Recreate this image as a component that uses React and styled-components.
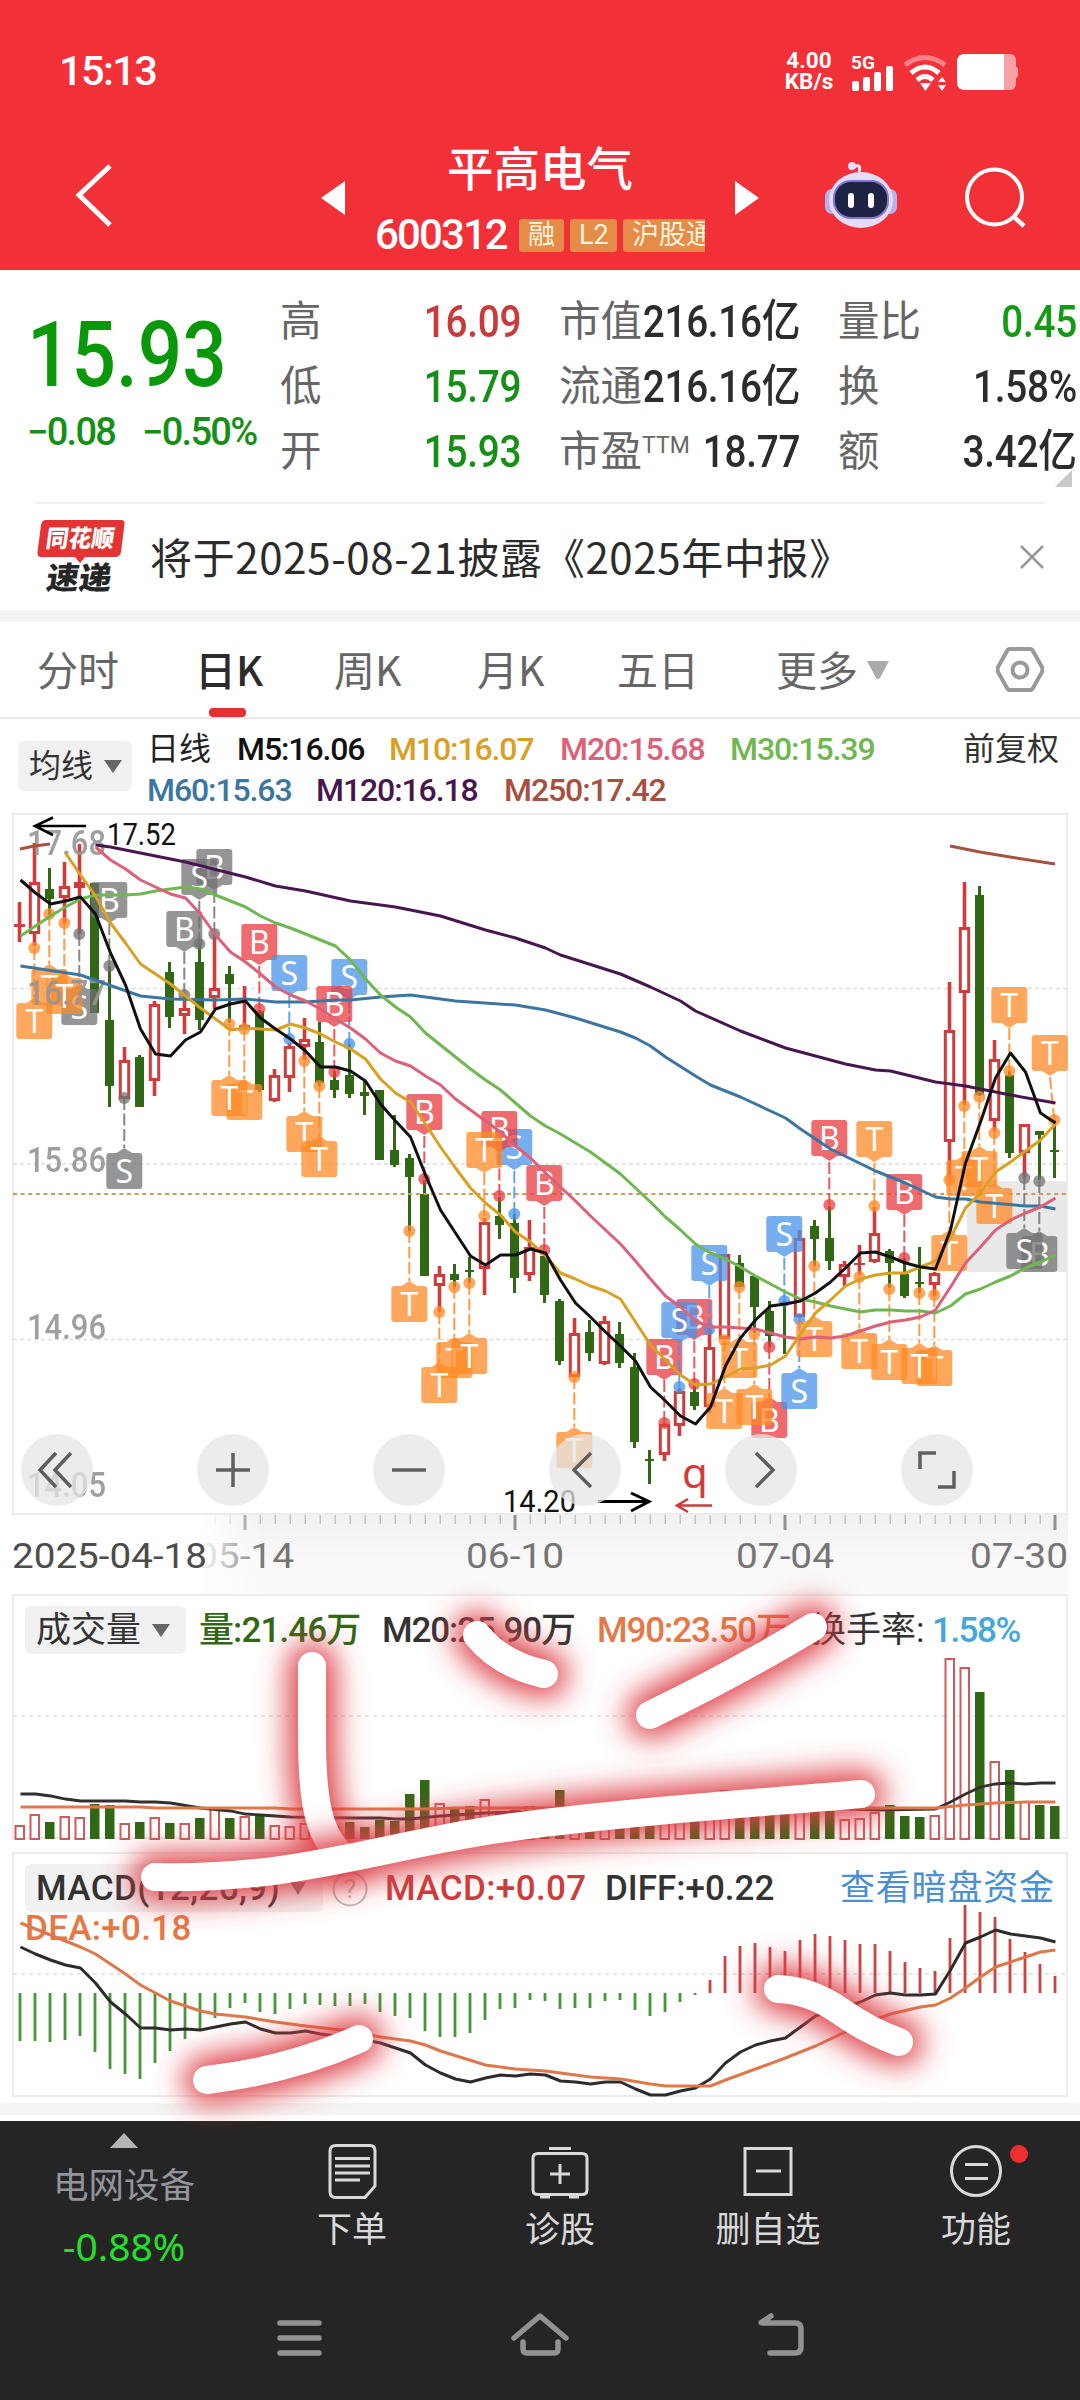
import styled, { createGlobalStyle } from "styled-components";

const GlobalStyle = createGlobalStyle`
  * {
    box-sizing: border-box;
  }
  body {
    margin: 0;
    background-color: white;
    font-family: Roboto, "Noto Sans CJK SC", sans-serif;
  }
  svg {
    display: block;
    flex: none;
  }
`;

const Page = styled.div`
  width: 1080px;
  height: 2400px;
  overflow: hidden;
  display: flex;
  flex-direction: column;
`;

const Text = styled.span`
  display: block;
  flex: none;
  white-space: nowrap;
  color: ${(props) => props.$color || "#333"};
  font-size: ${(props) => props.$size}px;
  font-weight: ${(props) => props.$weight || 400};
  letter-spacing: ${(props) => props.$ls || 0}px;
  line-height: 1;
  width: ${(props) => (props.$w ? props.$w + "px" : "auto")};
`;

/* header */

const Header = styled.header`
  height: 270px;
  flex: none;
  background-color: #f23038;
`;

const StatusBar = styled.div`
  height: 142px;
  padding: 0 62px 0 59px;
  display: flex;
  align-items: center;
`;

const StatusIcons = styled.div`
  margin-left: auto;
  display: flex;
  align-items: center;
`;

const Speed = styled.div`
  display: flex;
  flex-direction: column;
  align-items: center;
  width: 48px;
  margin-right: 17px;
  color: white;
  font-size: 22.5px;
  line-height: 21px;
  font-weight: 700;
`;

const TitleBar = styled.div`
  height: 128px;
  display: flex;
  align-items: flex-start;
  padding-left: 75px;
`;

const BackButton = styled.div`
  width: 246px;
  padding-top: 20px;
`;

const Arrow = styled.div`
  width: ${(props) => props.$w}px;
  padding-top: 39px;
`;

const TitleBlock = styled.div`
  width: 330px;
  margin-right: 30px;
  display: flex;
  flex-direction: column;
  align-items: center;
`;

const StockName = styled.div`
  height: 72px;
  line-height: 56px;
  font-size: 46.5px;
  font-weight: 500;
  color: white;
`;

const CodeRow = styled.div`
  width: 330px;
  height: 42px;
  display: flex;
  align-items: center;
  gap: 6px;
  overflow: hidden;
`;

const Tag = styled.span`
  flex: none;
  height: 33px;
  width: ${(props) => props.$w}px;
  padding-left: 9px;
  overflow: hidden;
  white-space: nowrap;
  border-radius: ${(props) => (props.$cut ? "3px 0 0 3px" : "3px")};
  background-color: #e48c48;
  color: #fff4dc;
  font-size: 27px;
  line-height: 33px;
`;

/* quote */

const Quote = styled.section`
  height: 232px;
  flex: none;
  display: flex;
  padding: 19px 0 0 27px;
  position: relative;
`;

const PriceBlock = styled.div`
  width: 253px;
  padding-top: 21px;
`;

const Price = styled(Text)`
  transform: scaleX(0.86);
  transform-origin: left;
`;

const Change = styled.div`
  display: flex;
  margin-top: 12px;
`;

const Stats = styled.div`
  display: grid;
  grid-template-columns: 241px 241px 239px;
  grid-auto-rows: 65px;
  column-gap: 38px;
`;

const Stat = styled.div`
  display: flex;
  align-items: center;
  justify-content: space-between;
`;

const Value = styled(Text)`
  margin-left: -60px;
  transform: scaleX(0.86);
  transform-origin: right;
`;

const Sup = styled.sup`
  font-size: 23px;
  line-height: 0;
  vertical-align: 13px;
`;

const Corner = styled.i`
  position: absolute;
  right: 8px;
  top: 200px;
  border-left: 17px solid transparent;
  border-bottom: 17px solid #c9c9c9;
`;

const Notice = styled.section`
  height: 108px;
  flex: none;
  margin: 0 36px;
  border-top: 2px solid #eee;
  display: flex;
  align-items: center;
`;

const NoticeText = styled.p`
  margin: 0 auto 0 24px;
  padding-bottom: 4px;
  font-family: "Noto Sans CJK SC", sans-serif;
  font-size: 42px;
  letter-spacing: 0.65px;
  color: #2b2b2b;
  white-space: nowrap;
`;

const Band = styled.div`
  height: 12px;
  flex: none;
  background-color: #f4f4f4;
`;

/* tabs */

const Tabs = styled.nav`
  height: 97px;
  flex: none;
  display: flex;
  border-bottom: 2px solid #e8e8e8;
  padding-left: 37px;
`;

const Tab = styled.div`
  width: ${(props) => props.$w}px;
  display: flex;
  flex-direction: column;
  justify-content: space-between;
  padding-top: 22px;
  font-family: "Noto Sans CJK SC", sans-serif;
  font-size: 41px;
  line-height: 49px;
  font-weight: ${(props) => (props.$active ? 500 : 400)};
  color: ${(props) => (props.$active ? "#2b2b2b" : "#666")};
`;

const Underline = styled.i`
  width: 37px;
  height: 9px;
  margin-left: 14px;
  border-radius: 4px;
  background-color: #e5302f;
`;

const MoreTab = styled(Tab)`
  flex-direction: row;
  justify-content: flex-start;
  gap: 9px;
`;

const Triangle = styled.i`
  flex: none;
  border: ${(props) => props.$s}px solid transparent;
  border-top: ${(props) => props.$h}px solid ${(props) => props.$color};
  border-bottom: 0;
`;

/* indicators */

const Legend = styled.section`
  height: 94px;
  flex: none;
  display: flex;
  padding: 9px 0 0 18px;
`;

const Picker = styled.div`
  width: ${(props) => props.$w}px;
  height: ${(props) => props.$h}px;
  margin-top: ${(props) => props.$mt || 0}px;
  padding-left: 11px;
  display: flex;
  flex: none;
  align-items: center;
  gap: 11px;
  border-radius: 6px;
  background-color: #f1f1f1;
`;

const LegendRows = styled.div`
  margin-left: 15px;
  width: 816px;
`;

const LegendRow = styled.div`
  height: 41px;
  display: flex;
  align-items: center;
`;

/* charts */

const Charts = styled.section`
  position: relative;
  height: 1290px;
  flex: none;
`;

const Controls = styled.div`
  position: absolute;
  left: 21px;
  top: 621px;
  display: flex;
  gap: 104px;
`;

const Round = styled.button`
  width: 72px;
  height: 72px;
  padding: 0;
  border: 0;
  border-radius: 50%;
  background-color: rgba(230, 230, 230, 0.75);
`;

const Panel = styled.div`
  position: relative;
  height: ${(props) => props.$h}px;
`;

const PanelHead = styled.div`
  position: absolute;
  left: 25px;
  top: ${(props) => props.$top}px;
  width: 1040px;
  height: 50px;
  display: flex;
  align-items: center;
`;

const VolumeText = styled(Text)`
  margin-left: 13px;
`;

const Overlay = styled.svg`
  position: absolute;
  left: 0;
  top: ${(props) => props.$top || 0}px;
`;

/* bottom */

const Bottom = styled.footer`
  height: 279px;
  flex: none;
  margin-top: 6px;
  background-color: #252525;
`;

const Actions = styled.div`
  height: 150px;
  display: flex;
`;

const Sector = styled.div`
  width: 248px;
  display: flex;
  flex-direction: column;
  align-items: center;
  gap: 21px;
  padding-top: 12px;
`;

const SectorChange = styled(Text)`
  font-family: "Noto Sans", sans-serif;
`;

const Up = styled.i`
  border: 14px solid transparent;
  border-bottom: 15px solid #b5b5b5;
  border-top: 0;
`;

const Action = styled.div`
  width: 208px;
  display: flex;
  flex-direction: column;
  align-items: center;
  padding-top: 18px;
  font-family: "Noto Sans CJK SC", sans-serif;
  font-size: 35px;
  line-height: 46px;
  color: #d9d9d9;
`;

const NavKeys = styled.div`
  height: 129px;
  display: flex;
  justify-content: center;
  gap: 180px;
  padding-top: 36px;
`;

const X = (i) => 19.5 + 15 * i;

// [up, high, low, body top, body bottom] in chart pixels
const candles = [
  [1, 902, 942, 924, 927], [1, 843, 946, 882, 934], [0, 868, 915, 889, 899], [1, 862, 923, 886, 898],
  [1, 844, 934, 882, 888], [0, 883, 1013, 883, 1013], [0, 966, 1107, 1020, 1086], [1, 1047, 1099, 1060, 1099],
  [0, 1055, 1107, 1057, 1107], [1, 1001, 1096, 1004, 1081], [0, 962, 1028, 972, 1017], [1, 996, 1034, 1008, 1016],
  [0, 943, 1030, 962, 1020], [1, 934, 1009, 988, 998], [0, 966, 1023, 974, 984], [1, 986, 1028, 1025, 1029],
  [0, 1010, 1092, 1011, 1090], [1, 1069, 1102, 1075, 1101], [1, 1043, 1092, 1046, 1078], [1, 1018, 1060, 1039, 1047],
  [0, 1022, 1086, 1042, 1083], [0, 1071, 1098, 1080, 1090], [0, 1044, 1098, 1075, 1094], [0, 1081, 1115, 1092, 1096],
  [0, 1090, 1160, 1090, 1160], [0, 1115, 1167, 1150, 1165], [0, 1154, 1231, 1158, 1177], [0, 1180, 1276, 1194, 1276],
  [1, 1266, 1312, 1274, 1286], [0, 1264, 1287, 1274, 1280], [0, 1257, 1283, 1270, 1272], [1, 1218, 1295, 1222, 1269],
  [0, 1197, 1239, 1216, 1225], [0, 1214, 1293, 1223, 1278], [1, 1220, 1281, 1247, 1275], [0, 1252, 1303, 1256, 1295],
  [0, 1299, 1365, 1301, 1361], [1, 1318, 1377, 1333, 1377], [0, 1320, 1361, 1332, 1353], [1, 1316, 1365, 1321, 1364],
  [0, 1322, 1368, 1334, 1363], [0, 1353, 1448, 1367, 1442], [0, 1450, 1484, 1459, 1461], [1, 1423, 1461, 1424, 1455],
  [1, 1388, 1436, 1391, 1426], [0, 1385, 1410, 1392, 1406], [1, 1325, 1413, 1347, 1407], [1, 1254, 1339, 1254, 1339],
  [0, 1255, 1287, 1263, 1287], [0, 1276, 1333, 1276, 1307], [0, 1301, 1347, 1311, 1336], [0, 1301, 1354, 1302, 1304],
  [1, 1230, 1318, 1238, 1317], [0, 1220, 1266, 1226, 1239], [0, 1206, 1270, 1238, 1261], [1, 1261, 1286, 1264, 1277],
  [1, 1245, 1275, 1263, 1265], [1, 1207, 1263, 1233, 1262], [0, 1249, 1288, 1251, 1263], [0, 1258, 1298, 1274, 1296],
  [0, 1247, 1293, 1282, 1284], [1, 1272, 1296, 1273, 1285], [1, 982, 1180, 1030, 1142], [1, 882, 1105, 927, 993],
  [0, 886, 1096, 895, 1095], [1, 1040, 1132, 1059, 1121], [0, 1071, 1158, 1075, 1153], [1, 1124, 1178, 1124, 1153],
  [0, 1131, 1180, 1131, 1135], [0, 1120, 1178, 1150, 1152],
];

const m5 = [880, 893, 904, 901, 897, 914, 953, 985, 1029, 1054, 1056, 1040, 1032, 1009, 1004, 1001, 1018, 1029, 1039, 1051, 1067, 1067, 1071, 1081, 1104, 1121, 1137, 1175, 1210, 1233, 1256, 1265, 1255, 1255, 1249, 1253, 1280, 1303, 1317, 1332, 1346, 1361, 1387, 1401, 1416, 1424, 1407, 1366, 1338, 1320, 1306, 1304, 1301, 1293, 1282, 1268, 1253, 1252, 1257, 1263, 1267, 1269, 1230, 1163, 1122, 1078, 1053, 1072, 1113, 1123];
const m10 = [853, 875, 896, 923, 943, 964, 974, 984, 996, 1008, 1019, 1030, 1028, 1029, 1030, 1024, 1028, 1034, 1042, 1049, 1059, 1079, 1093, 1102, 1124, 1147, 1168, 1188, 1203, 1215, 1232, 1242, 1256, 1273, 1279, 1286, 1291, 1299, 1322, 1345, 1360, 1375, 1385, 1384, 1377, 1369, 1368, 1365, 1356, 1334, 1313, 1300, 1286, 1279, 1275, 1273, 1273, 1267, 1261, 1238, 1208, 1193, 1172, 1162, 1151, 1140, 1124];
const m20 = [847, 860, 869, 880, 887, 894, 898, 914, 935, 952, 962, 974, 987, 995, 1001, 1009, 1019, 1028, 1039, 1053, 1061, 1066, 1076, 1085, 1099, 1110, 1121, 1132, 1146, 1158, 1173, 1187, 1201, 1216, 1230, 1244, 1261, 1279, 1296, 1307, 1321, 1327, 1327, 1328, 1329, 1333, 1337, 1339, 1337, 1338, 1336, 1331, 1326, 1322, 1320, 1317, 1310, 1287, 1263, 1247, 1230, 1220, 1213, 1207, 1198];
const m30 = [936, 926, 916, 907, 899, 895, 895, 895, 894, 891, 889, 887, 889, 895, 901, 907, 916, 923, 928, 934, 940, 946, 960, 979, 995, 1007, 1017, 1033, 1045, 1057, 1069, 1080, 1090, 1103, 1116, 1126, 1134, 1143, 1152, 1163, 1174, 1188, 1202, 1217, 1230, 1244, 1253, 1259, 1267, 1276, 1284, 1292, 1299, 1302, 1306, 1309, 1312, 1310, 1310, 1311, 1311, 1313, 1306, 1294, 1289, 1282, 1276, 1268, 1262, 1255];

// sparse lines as [index, y]
const m60 = [[0, 966], [4, 975], [8, 996], [10, 999], [13, 1000], [15, 999], [17, 1002], [19, 1002], [21, 1000], [22, 1000], [24, 997], [26, 995], [29, 1001], [33, 1005], [35, 1010], [37, 1018], [40, 1032], [41, 1038], [42, 1046], [43, 1057], [45, 1076], [46, 1085], [48, 1097], [50, 1111], [51, 1118], [52, 1129], [54, 1149], [57, 1171], [59, 1183], [61, 1197], [62, 1199], [63, 1199], [64, 1202], [67, 1206], [68, 1206], [69, 1209]];
const m120 = [[5, 845], [6, 847], [8, 853], [11, 862], [15, 877], [17, 886], [19, 891], [22, 901], [25, 907], [28, 916], [31, 930], [33, 938], [35, 948], [36, 955], [40, 974], [42, 987], [44, 1001], [45, 1011], [48, 1031], [51, 1048], [53, 1056], [55, 1064], [57, 1070], [58, 1071], [61, 1082], [63, 1086], [66, 1095], [69, 1103]];

const dense = (values, start = 0) => values.map((y, k) => `${X(k + start) + 1},${y}`).join(" ");
const sparse = (points) => points.map(([i, y]) => `${X(i) + 1},${y}`).join(" ");

const markerColors = { o: "#ff8a26", g: "#727272", r: "#e93c40", b: "#4a93ea" };

// [letter, colour, index, box top, dot y, box shift]
const markers = [
  ["T", "o", 1, 1003, 948], ["T", "o", 2, 969, 914], ["S", "g", 4, 989, 934], ["T", "o", 3, 978, 923],
  ["B", "g", 6, 882, 966], ["S", "g", 7, 1153, 1098], ["B", "g", 11, 911, 995], ["B", "g", 13, 849, 934],
  ["S", "g", 12, 859, 944], ["T", "o", 15, 1084, 1029], ["T", "o", 14, 1080, 1024], ["B", "r", 16, 924, 1009],
  ["S", "b", 18, 955, 1039], ["T", "o", 19, 1116, 1061], ["T", "o", 20, 1141, 1086], ["S", "b", 22, 959, 1044],
  ["B", "r", 21, 986, 1072], ["T", "o", 26, 1286, 1231], ["B", "r", 27, 1094, 1179], ["T", "o", 29, 1342, 1287],
  ["T", "o", 28, 1367, 1312], ["T", "o", 30, 1338, 1283], ["S", "b", 33, 1129, 1214], ["B", "r", 32, 1111, 1196],
  ["T", "o", 31, 1132, 1216], ["B", "r", 35, 1165, 1250], ["T", "o", 37, 1432, 1377], ["B", "r", 43, 1339, 1423],
  ["B", "r", 45, 1299, 1384], ["S", "b", 44, 1302, 1387], ["S", "b", 46, 1245, 1329], ["T", "o", 47, 1393, 1340],
  ["T", "o", 48, 1342, 1287], ["B", "r", 50, 1402, 1347], ["T", "o", 49, 1389, 1334], ["S", "b", 51, 1216, 1301],
  ["S", "b", 52, 1373, 1319], ["T", "o", 53, 1321, 1266], ["B", "r", 54, 1120, 1205], ["T", "o", 56, 1333, 1277],
  ["T", "o", 57, 1121, 1206], ["T", "o", 58, 1344, 1289], ["B", "r", 59, 1174, 1258], ["T", "o", 61, 1350, 1295],
  ["T", "o", 60, 1348, 1293], ["T", "o", 62, 1235, 1180], ["T", "o", 63, 1160, 1106], ["T", "o", 64, 1151, 1097],
  ["T", "o", 65, 1188, 1133], ["T", "o", 66, 987, 1071], ["T", "o", 69, 1035, 1120, -4.5], ["B", "g", 68, 1236, 1181],
  ["S", "g", 67, 1233, 1178],
];

const volume = [1825, 1814, 1822, 1816, 1817, 1804, 1805, 1823, 1822, 1817, 1823, 1823, 1818, 1807, 1818, 1816, 1816, 1825, 1826, 1823, 1828, 1826, 1822, 1827, 1820, 1821, 1794, 1780, 1803, 1809, 1806, 1799, 1811, 1810, 1806, 1810, 1790, 1818, 1819, 1815, 1812, 1808, 1812, 1812, 1810, 1812, 1805, 1790, 1805, 1805, 1805, 1808, 1800, 1806, 1811, 1819, 1818, 1812, 1805, 1816, 1817, 1815, 1658, 1667, 1692, 1761, 1770, 1801, 1805, 1806];
const volM20 = [[0, 1794], [1, 1794], [2, 1796], [3, 1799], [4, 1801], [7, 1801], [8, 1802], [9, 1802], [10, 1803], [12, 1808], [14, 1811], [15, 1814], [16, 1815], [18, 1817], [22, 1818], [24, 1818], [25, 1819], [26, 1819], [28, 1816], [31, 1813], [34, 1812], [38, 1807], [46, 1804], [54, 1808], [57, 1810], [61, 1809], [62, 1802], [63, 1794], [64, 1787], [65, 1784], [66, 1783], [67, 1784], [68, 1783], [69, 1783]];
const volM90 = [[0, 1807], [8, 1807], [9, 1808], [17, 1808], [18, 1809], [27, 1809], [29, 1808], [61, 1808], [63, 1805], [65, 1803], [67, 1802], [69, 1802]];

const macd = [2041, 2041, 2042, 2040, 2036, 2052, 2069, 2074, 2079, 2063, 2051, 2039, 2029, 2018, 2008, 2003, 2012, 2014, 2009, 2004, 2005, 2006, 2006, 2004, 2012, 2016, 2018, 2031, 2037, 2037, 2033, 2020, 2009, 2008, 2000, 2001, 2009, 2008, 2008, 2001, 2000, 2010, 2016, 2012, 2002, 1995, 1980, 1956, 1946, 1943, 1947, 1951, 1940, 1934, 1936, 1940, 1944, 1944, 1951, 1962, 1968, 1971, 1938, 1905, 1912, 1917, 1939, 1952, 1964, 1976];
const diff = [1947, 1954, 1960, 1965, 1968, 1983, 2002, 2014, 2028, 2028, 2030, 2029, 2030, 2027, 2024, 2022, 2029, 2033, 2033, 2031, 2034, 2036, 2038, 2040, 2043, 2048, 2053, 2065, 2073, 2079, 2082, 2078, 2075, 2076, 2074, 2075, 2081, 2082, 2084, 2082, 2082, 2089, 2095, 2095, 2091, 2088, 2079, 2063, 2052, 2045, 2041, 2038, 2027, 2016, 2010, 2007, 2002, 1995, 1993, 1995, 1995, 1994, 1970, 1943, 1937, 1930, 1934, 1936, 1938, 1942];
const dea = [[0, 1923], [4, 1947], [5, 1954], [6, 1964], [7, 1974], [8, 1985], [9, 1993], [10, 2001], [12, 2011], [13, 2014], [15, 2017], [17, 2022], [19, 2026], [22, 2031], [24, 2037], [26, 2041], [27, 2045], [28, 2051], [31, 2065], [33, 2069], [35, 2071], [38, 2077], [40, 2079], [42, 2084], [43, 2086], [46, 2086], [47, 2080], [49, 2069], [51, 2058], [53, 2046], [55, 2032], [56, 2025], [58, 2014], [60, 2007], [61, 2005], [62, 1998], [63, 1988], [64, 1977], [65, 1967], [66, 1962], [67, 1957], [68, 1952], [69, 1950]];

const RED = "#d03c3c";
const GREEN = "#316815";

function Candle({ data, i }) {
  const [up, high, low, top, bottom] = data;
  const x = X(i);
  if (!up) {
    return (
      <g fill={GREEN}>
        <rect x={x - 1.5} y={high} width="3" height={low - high} />
        <rect x={x - 4.5} y={top} width="9" height={bottom - top} />
      </g>
    );
  }
  const flat = bottom - top < 7;
  return (
    <g fill={RED}>
      <rect x={x - 1.8} y={high} width="3.6" height={Math.max(top - high, 0)} />
      <rect x={x - 1.8} y={bottom} width="3.6" height={Math.max(low - bottom, 0)} />
      <rect
        x={flat ? x - 5.5 : x - 4.2}
        y={flat ? top : top + 1.5}
        width={flat ? 11 : 8.4}
        height={flat ? bottom - top : bottom - top - 3}
        fill={flat ? RED : "white"}
        stroke={flat ? "none" : RED}
        strokeWidth="3"
      />
    </g>
  );
}

function Marker({ data }) {
  const [letter, key, i, top, dot, shift = 0] = data;
  const color = markerColors[key];
  const x = X(i) - 0.2;
  const bx = x + shift;
  const below = top > dot;
  const edge = below ? top : top + 36;
  const tip = below ? top - 5 : top + 41;
  return (
    <g>
      <circle cx={x} cy={dot} r="6" fill={color} opacity="0.75" />
      <line x1={x} y1={dot} x2={bx} y2={tip} stroke={color} strokeWidth="2" strokeDasharray="12 3.5" opacity="0.85" />
      <g fill={color} opacity="0.75">
        <rect x={bx - 18} y={top} width="36" height="36" rx="3" />
        <path d={`M${bx - 8} ${edge}L${bx} ${tip}L${bx + 8} ${edge}Z`} />
      </g>
      <text x={bx} y={top + 29.5} fill="white" fontSize="32" fontFamily="Noto Sans" textAnchor="middle">
        {letter}
      </text>
    </g>
  );
}

function AxisText({ x, y, w, color, size = 35, children }) {
  return (
    <text x={x} y={y} fill={color} fontSize={size} textLength={w} lengthAdjust="spacingAndGlyphs">
      {children}
    </text>
  );
}

function KChart() {
  return (
    <svg width="1080" height="781" viewBox="0 813 1080 781">
      <defs>
        <linearGradient id="strip" x1="0" x2="0" y1="0" y2="1">
          <stop offset="0" stopColor="#f1f1f1" />
          <stop offset="0.6" stopColor="#f9f9f9" />
          <stop offset="1" stopColor="#fafafa" />
        </linearGradient>
        <linearGradient id="fade" x1="0" x2="1" y1="0" y2="0">
          <stop offset="0.75" stopColor="white" />
          <stop offset="1" stopColor="white" stopOpacity="0" />
        </linearGradient>
      </defs>
      <rect x="0" y="1515" width="1068" height="79" fill="url(#strip)" />
      <rect x="13" y="814" width="1054" height="700" fill="white" stroke="#ececec" strokeWidth="2" />
      <g stroke="#dedede" strokeWidth="1.3" strokeDasharray="4 3">
        <path d="M13 988.5H1066M13 1164H1066M13 1339.5H1066" />
      </g>
      <rect x="967" y="1181" width="100" height="91" fill="#e9e9e9" />
      {candles.map((c, i) => (
        <Candle key={i} data={c} i={i} />
      ))}
      <path d="M13 1194H1066" stroke="#cd9a5b" strokeWidth="1.8" strokeDasharray="4 3.6" />
      {markers.map((m, i) => (
        <Marker key={i} data={m} />
      ))}
      <g fontWeight="500" opacity="0.9">
        <AxisText x="27" y="855" w="79" color="#959595">17.68</AxisText>
        <AxisText x="27" y="1005" w="79" color="#959595">16.77</AxisText>
        <AxisText x="27" y="1172" w="79" color="#959595">15.86</AxisText>
        <AxisText x="27" y="1339" w="79" color="#959595">14.96</AxisText>
        <AxisText x="27" y="1497" w="79" color="#959595">14.05</AxisText>
      </g>
      <g fill="none" strokeWidth="3" strokeLinejoin="round">
        <polyline points={sparse(m120)} stroke="#471650" />
        <polyline points={sparse(m60)} stroke="#3b76a0" />
        <polyline points={dense(m30)} stroke="#6fb751" />
        <polyline points={dense(m20, 5)} stroke="#dd6079" />
        <polyline points={dense(m10, 3)} stroke="#daa022" />
        <polyline points={dense(m5)} stroke="#111" />
        <polyline points="20,849 34,846 50,844" stroke="#a8503f" />
        <polyline points="950,846 980,852 1010,857 1055,864" stroke="#a8503f" />
      </g>
      <path d="M86 826H36M53 817.5L35 826L53 835" fill="none" stroke="black" strokeWidth="2.6" />
      <AxisText x="107" y="845" w="69" color="#111" size="31">17.52</AxisText>
      <AxisText x="503" y="1512" w="73" color="#111" size="31">14.20</AxisText>
      <path d="M598 1501.5H648M631 1493L649 1501.5L631 1511" fill="none" stroke="black" strokeWidth="3" />
      <text x="682" y="1488" fill={RED} fontSize="42" fontFamily="Noto Sans">q</text>
      <path d="M712 1505.5H678M688 1499L677 1505.5L688 1512" fill="none" stroke={RED} strokeWidth="2.6" />
      {Array.from({ length: 57 }, (_, k) => k + 13).map((i) => {
        const major = (i - 15) % 18 === 0;
        return (
          <rect key={i} x={X(i) + (major ? -1 : 0)} y="1515" width={major ? 3 : 1.5} height={major ? 15 : 9} fill={major ? "#909090" : "#c2c2c2"} />
        );
      })}
      <AxisText x="196" y="1568" w="98" color="#757575">05-14</AxisText>
      <rect x="0" y="1515" width="265" height="79" fill="url(#fade)" />
      <AxisText x="12" y="1568" w="195" color="#4c4c4c">2025-04-18</AxisText>
      <AxisText x="466" y="1568" w="98" color="#757575">06-10</AxisText>
      <AxisText x="736" y="1568" w="98" color="#757575">07-04</AxisText>
      <AxisText x="970" y="1568" w="98" color="#757575">07-30</AxisText>
    </svg>
  );
}

function VolumeChart() {
  return (
    <svg width="1080" height="258" viewBox="0 1594 1080 258">
      <rect x="13" y="1595" width="1054" height="243" fill="white" stroke="#ececec" strokeWidth="2" />
      <path d="M13 1716H1066" stroke="#e4e4e4" strokeWidth="2" strokeDasharray="4 4" />
      {volume.map((y, i) =>
        candles[i][0] ? (
          <rect key={i} x={X(i) - 4} y={y + 1} width="8.5" height={1838 - y} fill="white" stroke="#d05a5b" strokeWidth="2" />
        ) : (
          <rect key={i} x={X(i) - 4.5} y={y} width="9.5" height={1839 - y} fill={GREEN} />
        )
      )}
      <g fill="none" strokeWidth="2.8">
        <polyline points={sparse(volM20)} stroke="#303030" />
        <polyline points={sparse(volM90)} stroke="#e0794a" />
      </g>
    </svg>
  );
}

function MacdChart() {
  return (
    <svg width="1080" height="251" viewBox="0 1852 1080 251">
      <rect x="13" y="1853" width="1054" height="243" fill="white" stroke="#ececec" strokeWidth="2" />
      <path d="M13 1974H1066" stroke="#e4e4e4" strokeWidth="2" strokeDasharray="4 4" />
      {macd.map((y, i) => (
        <path key={i} d={`M${X(i) + 0.5} 1993V${y}`} stroke={y > 1993 ? "#47953b" : "#cb4343"} strokeWidth="2.8" />
      ))}
    </svg>
  );
}

const strokes = [
  "M312 1666V1735C312 1800 318 1835 342 1856",
  "M477 1635Q500 1664 544 1674",
  "M813 1627Q735 1674 650 1715",
  "M155 1877C290 1880 370 1850 480 1832S760 1803 861 1794",
  "M207 2080Q290 2070 359 2039",
  "M778 1989Q810 1990 840 2011T899 2042",
];

function Scribble() {
  return (
    <Overlay $top={727} width="1080" height="660" viewBox="0 1540 1080 660">
      <defs>
        <filter id="glow" filterUnits="userSpaceOnUse" x="0" y="1500" width="1080" height="700">
          <feGaussianBlur stdDeviation="15" />
        </filter>
      </defs>
      {strokes.map((d) => (
        <g key={d} fill="none" strokeLinecap="round">
          <path d={d} stroke="#dd3d45" strokeWidth="47" filter="url(#glow)" />
          <path d={d} stroke="white" strokeWidth="28" />
        </g>
      ))}
    </Overlay>
  );
}

function TopBar() {
  return (
    <Header>
      <StatusBar>
        <Text $size={41.5} $weight={500} $ls={-1.6} $color="white">15:13</Text>
        <StatusIcons>
          <Speed>
            <span>4.00</span>
            <span>KB/s</span>
          </Speed>
          <svg width="168" height="42" viewBox="850 49 168 42">
            <text x="851" y="68" fill="white" fontSize="19" fontWeight="700" textLength="24">5G</text>
            <g fill="white">
              <rect x="852" y="80" width="7" height="10" rx="2" />
              <rect x="863" y="76" width="7" height="14" rx="2" />
              <rect x="874" y="71" width="7" height="19" rx="2" />
              <rect x="886" y="65" width="7" height="25" rx="2" />
            </g>
            <g fill="none" stroke="white" strokeWidth="5">
              <path d="M905 64Q925 49 945 64" opacity="0.4" />
              <path d="M911 72Q925 60 939 72" />
              <path d="M917 79Q925 72 933 79" />
            </g>
            <path d="M920 82H931L925.5 90ZM938 81L942 76L946 81ZM938 84H946L942 90Z" fill="white" />
            <path d="M1004 53H1010Q1016 53 1016 60V66Q1019 67 1019 71Q1019 76 1016 77V82Q1016 89 1010 89H1004Z" fill="white" opacity="0.55" />
            <path d="M1004 53H965Q957 53 957 61V81Q957 89 965 89H1004Z" fill="white" />
          </svg>
        </StatusIcons>
      </StatusBar>
      <TitleBar>
        <BackButton>
          <svg width="40" height="66" viewBox="75 162 40 66">
            <path d="M110 166L79 195L110 225" fill="none" stroke="white" strokeWidth="5" />
          </svg>
        </BackButton>
        <Arrow $w={54}>
          <svg width="24" height="34" viewBox="0 0 24 34">
            <path d="M24 0V34L0 17Z" fill="white" />
          </svg>
        </Arrow>
        <TitleBlock>
          <StockName>平高电气</StockName>
          <CodeRow>
            <Text $size={42} $weight={500} $ls={-1.9} $w={138} $color="white">600312</Text>
            <Tag $w={45}>融</Tag>
            <Tag $w={47}>L2</Tag>
            <Tag $w={82} $cut>沪股通</Tag>
          </CodeRow>
        </TitleBlock>
        <Arrow $w={89}>
          <svg width="24" height="34" viewBox="0 0 24 34">
            <path d="M0 0V34L24 17Z" fill="white" />
          </svg>
        </Arrow>
        <svg width="220" height="90" viewBox="824 142 220 90">
          <path d="M859 172Q862 163 853 167" fill="none" stroke="#f3ecff" strokeWidth="3" />
          <circle cx="852" cy="166" r="4" fill="#e9defa" />
          <rect x="825" y="189" width="14" height="25" rx="7" fill="#b9b1ee" />
          <rect x="883" y="189" width="14" height="25" rx="7" fill="#b9b1ee" />
          <ellipse cx="861" cy="200" rx="32" ry="28" fill="#e3dcfb" />
          <rect x="833" y="180" width="56" height="39" rx="18" fill="#8173d8" />
          <rect x="835" y="182" width="52" height="35" rx="16" fill="#1d2443" />
          <rect x="848" y="193" width="6" height="15" rx="3" fill="white" />
          <rect x="868" y="193" width="6" height="15" rx="3" fill="white" />
          <circle cx="994.5" cy="197" r="27.5" fill="none" stroke="white" strokeWidth="4" />
          <path d="M1013 216L1024 226" stroke="white" strokeWidth="4.5" />
        </svg>
      </TitleBar>
    </Header>
  );
}

const UP = "#c93a3a";
const DOWN = "#158f15";

const stats = [
  ["高", "16.09", UP], ["市值", "216.16亿"], ["量比", "0.45", "#159a15"],
  ["低", "15.79", DOWN], ["流通", "216.16亿"], ["换", "1.58%"],
  ["开", "15.93", DOWN], ["市盈", "18.77", null, "TTM"], ["额", "3.42亿"],
];

function App() {
  return (
    <Page>
      <GlobalStyle />
      <TopBar />
      <Quote>
        <PriceBlock>
          <Price $size={91} $weight={500} $color="#0a980a">15.93</Price>
          <Change>
            <Text $size={38} $weight={500} $ls={-1.7} $w={115} $color={DOWN}>−0.08</Text>
            <Text $size={38} $weight={500} $ls={-1.7} $color={DOWN}>−0.50%</Text>
          </Change>
        </PriceBlock>
        <Stats>
          {stats.map(([label, value, color, sup]) => (
            <Stat key={label}>
              <Text $size={41.5} $color="#666">
                {label}
                {sup && <Sup>{sup}</Sup>}
              </Text>
              <Value $size={45} $weight={500} $ls={-0.3} $color={color || "#2c2c2c"}>{value}</Value>
            </Stat>
          ))}
        </Stats>
        <Corner />
      </Quote>
      <Notice>
        <svg width="90" height="76" viewBox="36 519 90 76">
          <path d="M46 520H121Q125 520 124.5 524L121 552Q120 557 115 557H85L80 563L75 557H41Q37 557 37.5 552L41 525Q42 520 46 520Z" fill="#e33433" />
          <g fontFamily="Noto Sans CJK SC" fontWeight="900" transform="skewX(-8)">
            <text x="122" y="547" fontSize="24" fill="white" textLength="68" lengthAdjust="spacingAndGlyphs">同花顺</text>
            <text x="128" y="589" fontSize="31" fill="#262626" textLength="65" lengthAdjust="spacingAndGlyphs">速递</text>
          </g>
        </svg>
        <NoticeText>将于2025-08-21披露《2025年中报》</NoticeText>
        <svg width="24" height="24" viewBox="0 0 24 24">
          <path d="M1 1L23 23M23 1L1 23" stroke="#999" strokeWidth="2.5" />
        </svg>
      </Notice>
      <Band />
      <Tabs>
        <Tab $w={158}>分时</Tab>
        <Tab $w={139} $active>
          日K
          <Underline />
        </Tab>
        <Tab $w={143}>周K</Tab>
        <Tab $w={140}>月K</Tab>
        <Tab $w={159}>五日</Tab>
        <MoreTab $w={220}>
          更多
          <svg width="22" height="49" viewBox="0 0 22 49">
            <path d="M0 17H22L13 34Q11 36 9 34Z" fill="#aaa" />
          </svg>
        </MoreTab>
        <svg width="48" height="96" viewBox="996 622 48 96">
          <g fill="none" stroke="#999" strokeWidth="4">
            <path d="M1010 649H1030Q1032 649 1033 651L1042 667Q1043 669.500 1042 672L1033 688Q1032 690 1030 690H1010Q1008 690 1007 688L998 672Q997 669.500 998 667L1007 651Q1008 649 1010 649Z" />
            <circle cx="1020" cy="670" r="7.5" />
          </g>
        </svg>
      </Tabs>
      <Legend>
        <Picker $w={114} $h={50} $mt={13}>
          <Text $size={32} $color="#333">均线</Text>
          <Triangle $s={9} $h={13} $color="#666" />
        </Picker>
        <LegendRows>
          <LegendRow>
            <Text $size={32} $w={90} $color="#222">日线</Text>
            <Text $size={32} $weight={500} $ls={-1.1} $w={152} $color="#111">M5:16.06</Text>
            <Text $size={32} $weight={500} $ls={-1.1} $w={171} $color="#daa022">M10:16.07</Text>
            <Text $size={32} $weight={500} $ls={-1.1} $w={170} $color="#dd6079">M20:15.68</Text>
            <Text $size={32} $weight={500} $ls={-1.1} $color="#6fb751">M30:15.39</Text>
          </LegendRow>
          <LegendRow>
            <Text $size={32} $weight={500} $ls={-1.1} $w={169} $color="#3b76a0">M60:15.63</Text>
            <Text $size={32} $weight={500} $ls={-1.1} $w={188} $color="#471650">M120:16.18</Text>
            <Text $size={32} $weight={500} $ls={-1.1} $color="#a8503f">M250:17.42</Text>
          </LegendRow>
        </LegendRows>
        <LegendRow>
          <Text $size={32} $color="#333">前复权</Text>
        </LegendRow>
      </Legend>
      <Charts>
        <Panel $h={781}>
          <KChart />
          <Controls>
            {[
              "M35 19L19 36L35 53M50 19L34 36L50 53",
              "M36 19V53M19 36H53",
              "M19 36H53",
              "M42 19L25 36L42 53",
              "M31 19L48 36L31 53",
              "M19 35V19H35M53 37V53H37",
            ].map((d) => (
              <Round key={d}>
                <svg width="72" height="72" viewBox="0 0 72 72">
                  <path d={d} fill="none" stroke="#5f5f5f" strokeWidth="3.5" />
                </svg>
              </Round>
            ))}
          </Controls>
        </Panel>
        <Panel $h={258}>
          <VolumeChart />
          <PanelHead $top={11}>
            <Picker $w={161} $h={48}>
              <Text $size={35} $color="#333">成交量</Text>
              <Triangle $s={9} $h={13} $color="#666" />
            </Picker>
            <VolumeText $size={35} $weight={500} $ls={-0.9} $w={183} $color={GREEN}>量:21.46万</VolumeText>
            <Text $size={35} $weight={500} $ls={-1.1} $w={215} $color="#333">M20:25.90万</Text>
            <Text $size={35} $weight={500} $ls={-1.1} $w={214} $color="#e67746">M90:23.50万</Text>
            <Text $size={35} $w={121} $color="#333">换手率:</Text>
            <Text $size={35} $weight={500} $ls={-1.5} $color="#45a6dc">1.58%</Text>
          </PanelHead>
        </Panel>
        <Panel $h={251}>
          <MacdChart />
          <PanelHead $top={11}>
            <Picker $w={298} $h={48}>
              <Text $size={35} $weight={500} $w={243} $ls={0.4} $color="#333">MACD(12,26,9)</Text>
              <Triangle $s={8} $h={13} $color="#777" />
            </Picker>
            <svg width="62" height="40" viewBox="0 0 62 40">
              <circle cx="27" cy="21" r="16.5" fill="none" stroke="#bbb" strokeWidth="2" />
              <text x="27" y="30" fontSize="26" fill="#bbb" textAnchor="middle">?</text>
            </svg>
            <Text $size={35} $weight={500} $ls={0.4} $w={220} $color="#cf3b3b">MACD:+0.07</Text>
            <Text $size={35} $weight={500} $ls={0} $w={235} $color="#333">DIFF:+0.22</Text>
            <Text $size={35} $ls={0.8} $color="#4a8fd3">查看暗盘资金</Text>
          </PanelHead>
          <PanelHead $top={51}>
            <Text $size={35} $weight={500} $ls={0.3} $color="#e67746">DEA:+0.18</Text>
          </PanelHead>
          <Overlay width="1080" height="251" viewBox="0 1852 1080 251">
            <g fill="none" strokeWidth="3" strokeLinejoin="round">
              <polyline points={dense(diff)} stroke="#2c2c2c" />
              <polyline points={sparse(dea)} stroke="#de7849" />
            </g>
          </Overlay>
        </Panel>
        <Scribble />
      </Charts>
      <Band />
      <Bottom>
        <Actions>
          <Sector>
            <Up />
            <Text $size={35.5} $color="#94949e">电网设备</Text>
            <SectorChange $size={39} $color="#25e02b">-0.88%</SectorChange>
          </Sector>
          <Action>
            <svg width="60" height="65" viewBox="322 2139 60 65">
              <g fill="none" stroke="#d9d9d9" strokeWidth="3">
                <path d="M336 2145.500H370Q375 2145.500 375 2151V2186L365 2197.500H336Q330 2197.500 330 2192V2151Q330 2145.500 336 2145.500Z" />
                <path d="M335 2158.500H370M335 2166H370M335 2173H370M335 2180H360" />
              </g>
            </svg>
            下单
          </Action>
          <Action>
            <svg width="60" height="65" viewBox="530 2139 60 65">
              <g fill="none" stroke="#d9d9d9" strokeWidth="3">
                <path d="M549 2148.500H571M538 2153.500H582Q587 2153.500 587 2158V2190Q587 2194.500 582 2194.500H538Q533 2194.500 533 2190V2158Q533 2153.500 538 2153.500Z" />
                <path d="M560 2164V2184M550 2174H570" />
                <path d="M540 2197H550M569 2197H579" />
              </g>
            </svg>
            诊股
          </Action>
          <Action>
            <svg width="60" height="65" viewBox="737 2139 60 65">
              <path d="M744 2148.500H790V2194.500H744ZM755 2171H780" fill="none" stroke="#d9d9d9" strokeWidth="3" />
            </svg>
            删自选
          </Action>
          <Action>
            <svg width="112" height="65" viewBox="919 2139 112 65">
              <circle cx="975" cy="2171" r="24.5" fill="none" stroke="#d9d9d9" strokeWidth="3" />
              <path d="M964 2164.500H987M964 2178.500H987" stroke="#d9d9d9" strokeWidth="3" />
              <circle cx="1018" cy="2154" r="9" fill="#ee2f30" />
            </svg>
            功能
          </Action>
        </Actions>
        <NavKeys>
          {[
            "M10 13H49M10 28H49M10 43H49",
            "M4 28L30 6L56 28M13 32V39Q13 43 17 43H44Q48 43 48 39V32",
            "M21 6L12 12Q10 13 13 13H45Q51 13 51 19V37Q51 43 45 43H20",
          ].map((d) => (
            <svg key={d} width="60" height="52" viewBox="0 0 60 52">
              <path d={d} transform="translate(0 3)" fill="none" stroke="#929292" strokeWidth="5.5" strokeLinecap="round" strokeLinejoin="round" />
            </svg>
          ))}
        </NavKeys>
      </Bottom>
    </Page>
  );
}

export default App;
